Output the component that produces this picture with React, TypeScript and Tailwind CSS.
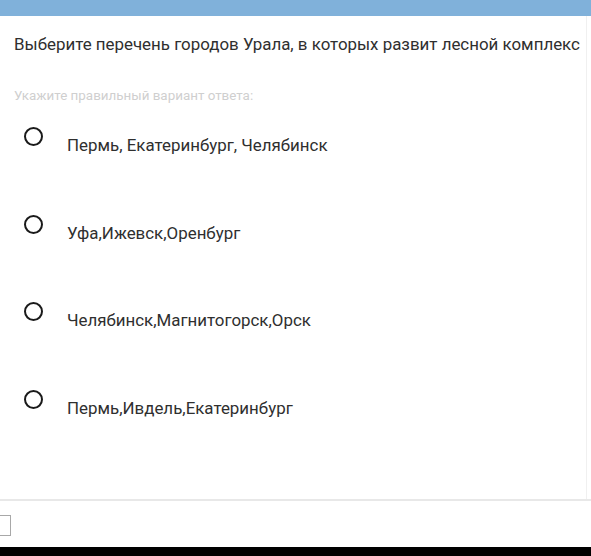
import React from "react";

const options = [
  "Пермь, Екатеринбург, Челябинск",
  "Уфа,Ижевск,Оренбург",
  "Челябинск,Магнитогорск,Орск",
  "Пермь,Ивдель,Екатеринбург",
];

const App = () => {
  return (
    <div
      className="w-[591px] h-[556px] flex flex-col bg-white overflow-hidden"
      style={{ fontFamily: "Roboto, 'Noto Sans', sans-serif" }}
    >
      <div className="h-[16px] bg-[#80b1da] shrink-0" />
      <main className="flex-1 flex flex-col border-r border-[#f0f0f0] mr-[4px]">
        <h1 className="px-[14px] pt-[16px] text-[16.9px] leading-[24px] text-[#2f2f2f] whitespace-nowrap">
          Выберите перечень городов Урала, в которых развит лесной комплекс
        </h1>
        <p className="px-[14px] mt-[31px] text-[13.4px] leading-[18px] text-[#cfcfcf]">
          Укажите правильный вариант ответа:
        </p>
        <ul className="mt-[22px] pl-[24px]">
          {options.map((opt, i) => (
            <li key={i} className="flex items-start h-[87.5px]">
              <span className="w-[19px] h-[19px] rounded-full border-[2.75px] border-[#1a1a1a] shrink-0" />
              <span className="ml-[24px] mt-[6px] text-[16.9px] leading-[24px] text-[#2f2f2f] whitespace-nowrap">
                {opt}
              </span>
            </li>
          ))}
        </ul>
        <div className="flex-1" />
      </main>
      <footer className="h-[48px] shrink-0 border-t-2 border-[#e8e8e8] flex items-center">
        <div className="w-[12px] h-[21px] border border-[#a8a8a8] border-l-0 -ml-px mt-[2px]" />
      </footer>
      <div className="h-[9px] bg-black shrink-0" />
    </div>
  );
};

export default App;
